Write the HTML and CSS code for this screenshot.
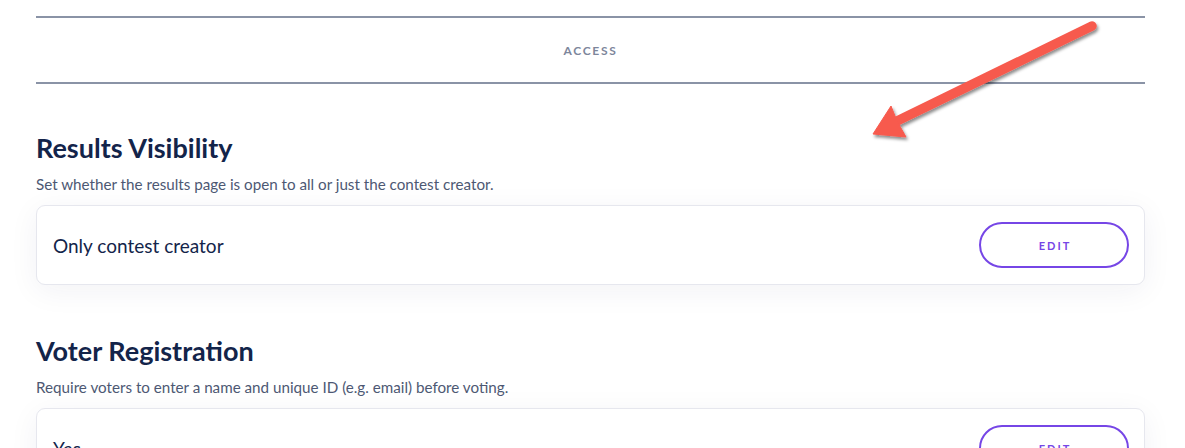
FILE: index.html
```html
<!DOCTYPE html>
<html>
<head>
<meta charset="utf-8">
<link rel="stylesheet" href="styles.css">
</head>
<body>
<div class="page">
  <div class="tab-header"><span class="tab-label">ACCESS</span></div>

  <section class="setting">
    <h2 class="setting-title">Results Visibility</h2>
    <p class="setting-desc">Set whether the results page is open to all or just the contest creator.</p>
    <div class="card">
      <span class="card-value">Only contest creator</span>
      <button class="edit-btn">EDIT</button>
    </div>
  </section>

  <section class="setting">
    <h2 class="setting-title">Voter Registration</h2>
    <p class="setting-desc">Require voters to enter a name and unique ID (e.g. email) before voting.</p>
    <div class="card">
      <span class="card-value">Yes</span>
      <button class="edit-btn">EDIT</button>
    </div>
  </section>
</div>

<svg class="arrow" width="1185" height="448" viewBox="0 0 1185 448">
  <defs>
    <filter id="sh" x="-20%" y="-20%" width="140%" height="140%">
      <feDropShadow dx="1.5" dy="2.5" stdDeviation="1.6" flood-color="#000" flood-opacity="0.45"/>
    </filter>
  </defs>
  <g filter="url(#sh)" fill="#f75a4e" stroke="#f75a4e">
    <line x1="1092" y1="26" x2="895" y2="122" stroke-width="9.5" stroke-linecap="round"/>
    <polygon points="873,134 891,106 897,121 906,137" stroke-width="1" stroke-linejoin="round"/>
  </g>
</svg>
</body>
</html>
```

FILE: styles.css
```css
html, body {
  margin: 0;
  padding: 0;
  background: #ffffff;
  font-family: Lato, "Open Sans", "Liberation Sans", sans-serif;
  overflow: hidden;
}

.page {
  padding: 16px 40px 0 36px;
  width: 1109px;
}

.tab-header {
  border-top: 2px solid #8a93a6;
  border-bottom: 2px solid #8a93a6;
  height: 64px;
  display: flex;
  align-items: center;
  justify-content: center;
}

.tab-label {
  font-size: 12px;
  font-weight: 700;
  letter-spacing: 1.7px;
  color: #7d869b;
  margin-top: 1px;
}

.setting {
  padding-top: 48px;
}

.setting + .setting {
  padding-top: 50px;
}

.setting-title {
  margin: 0;
  font-size: 27px;
  line-height: 32px;
  font-weight: 700;
  color: #13244a;
}

.setting-desc {
  margin: 11px 0 0 0;
  font-size: 15.2px;
  line-height: 18px;
  color: #4d5873;
}

.card {
  margin-top: 12px;
  height: 78px;
  border: 1px solid #e6e7ee;
  border-radius: 9px;
  background: #fff;
  box-shadow: 0 6px 30px rgba(30, 40, 90, 0.06);
  display: flex;
  align-items: center;
  justify-content: space-between;
  padding: 0 15px 0 16px;
}

.card-value {
  font-size: 19px;
  color: #13244a;
}

.edit-btn {
  width: 150px;
  height: 46px;
  border: 2px solid #7646e6;
  border-radius: 23px;
  background: #fff;
  color: #7646e6;
  font-family: Lato, "Open Sans", "Liberation Sans", sans-serif;
  font-size: 11px;
  font-weight: 700;
  letter-spacing: 2px;
  padding: 0 0 0 2px;
}

.arrow {
  position: absolute;
  left: 0;
  top: 0;
  pointer-events: none;
}
```
